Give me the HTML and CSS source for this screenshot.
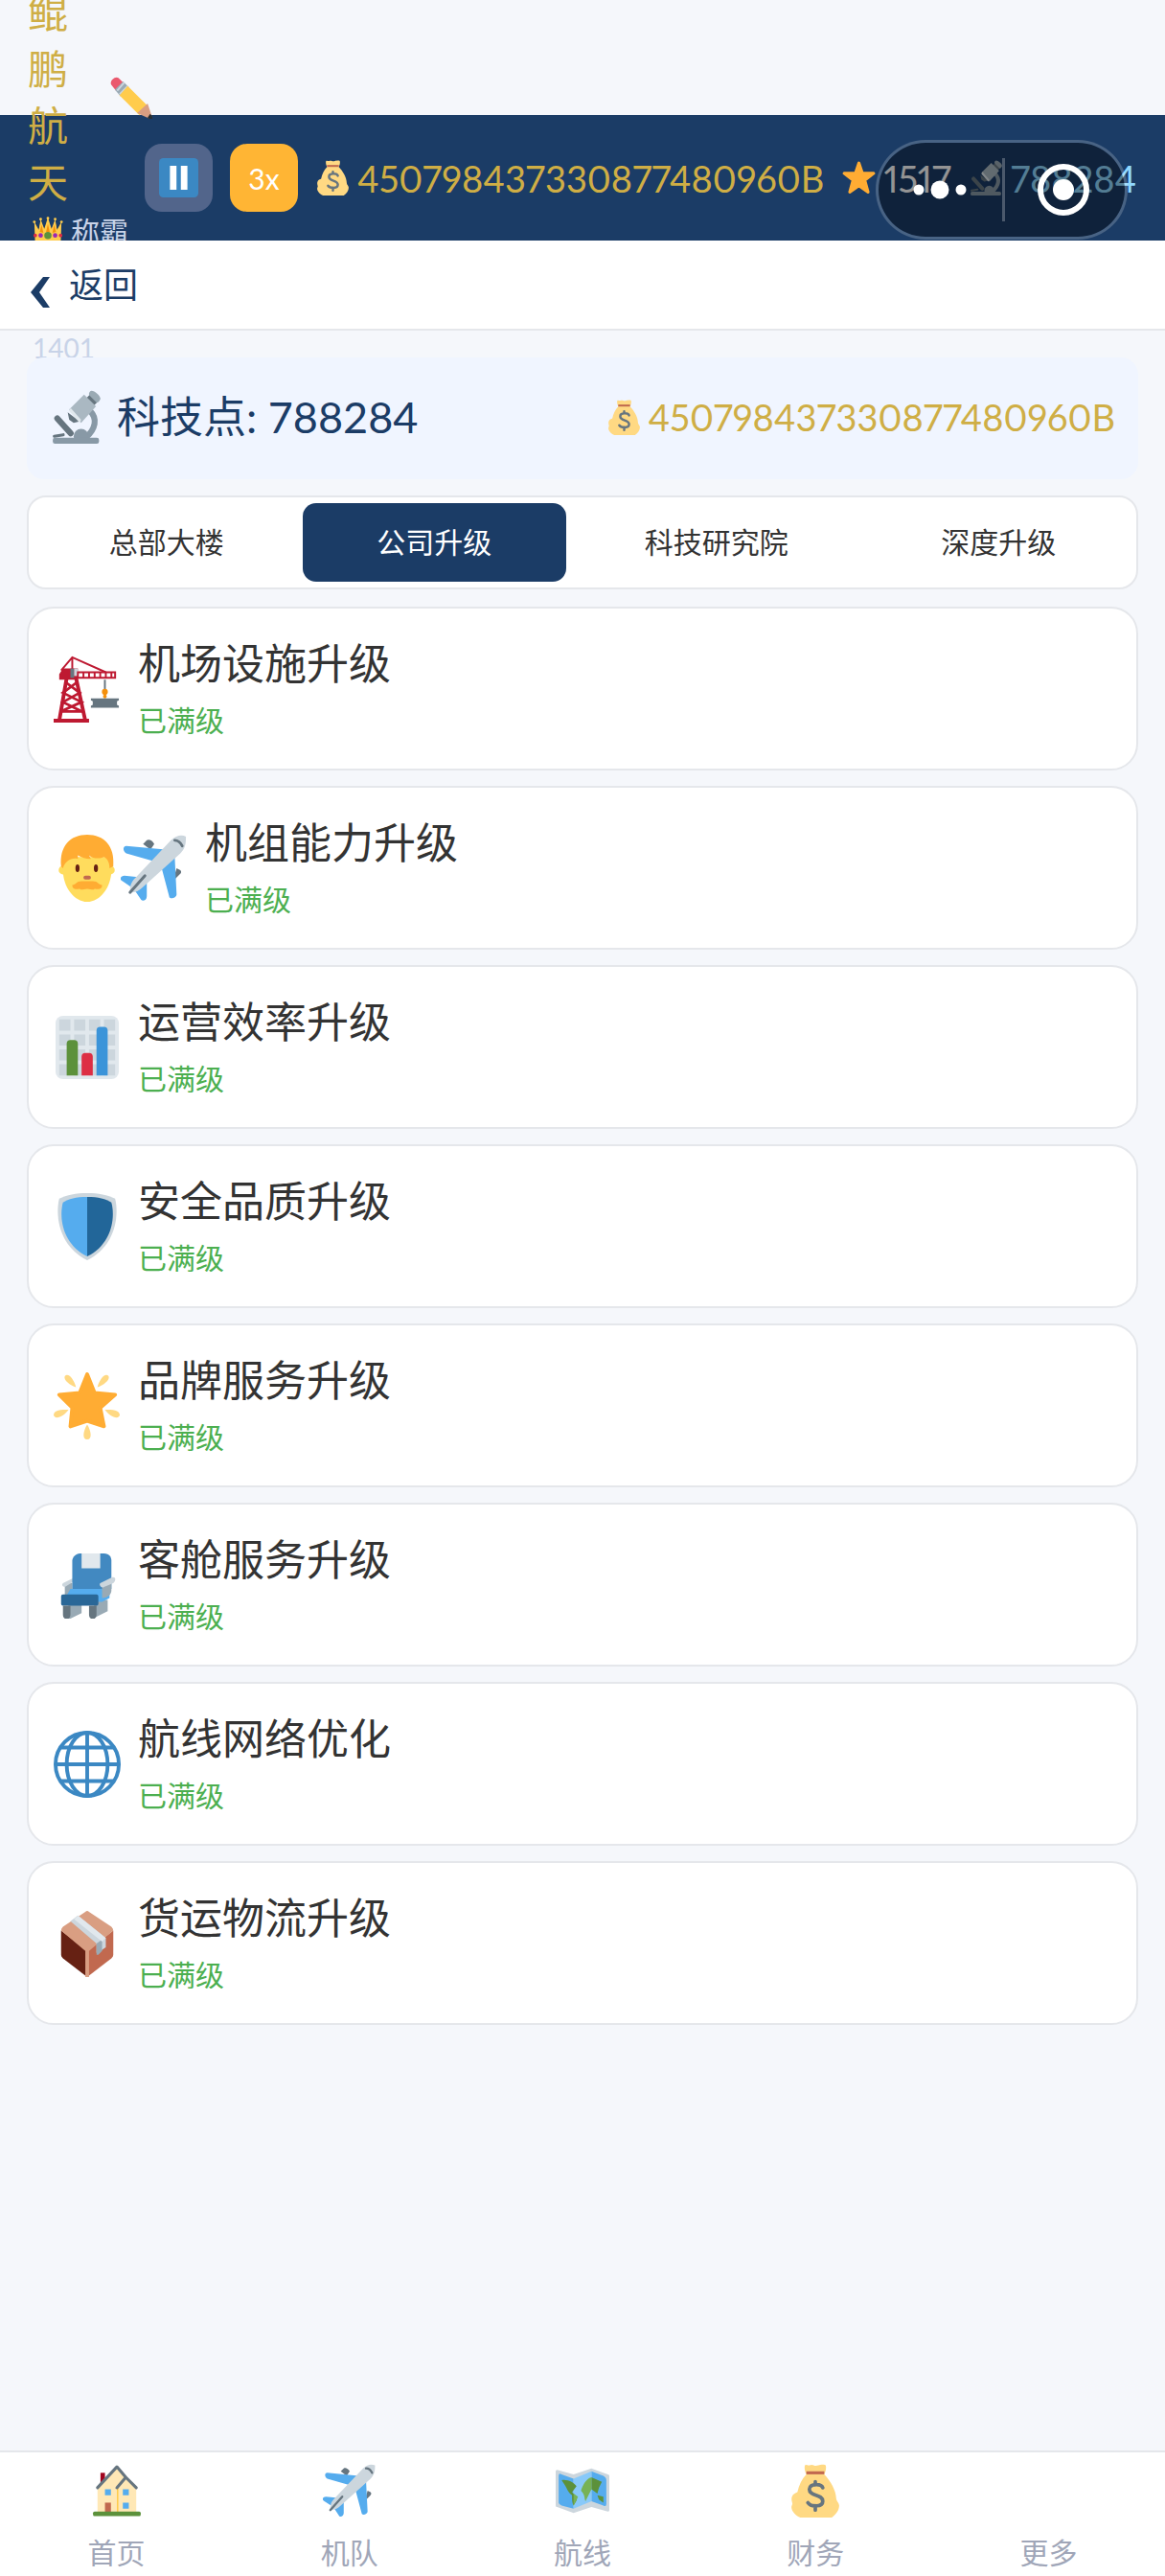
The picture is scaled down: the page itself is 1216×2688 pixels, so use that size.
FILE: index.html
```
<!DOCTYPE html>
<html lang="zh-CN">
<head>
    <meta charset="UTF-8">
    <meta name="viewport" content="width=device-width, initial-scale=1.0">
    <title>公司升级</title>
    <link rel="stylesheet" href="styles.css">
</head>
<body>
    <!-- icon sprite -->
    <svg class="sprite" aria-hidden="true">
        <symbol id="i-bag" viewBox="0 0 36 36">
            <path fill="#FFD983" d="M11 1c1-1 2 .4 3 0s2-.6 3 0 2 .2 3 0 4-1 5 0c.5 2 0 4-1 6 4 4 8 11 8 16 0 2 2 3 2 5 0 3-2 6-5 8H8c-3-1-6-4-6-7 0-1 1-2 .5-3C1 21 4 20 6 19c1-5 3-9 6-12-1-2-1.500-4-1-6z"/>
            <path fill="#C1694F" d="M12 5h12v2H12z"/>
            <path fill="none" stroke="#67757F" stroke-width="2.400" stroke-linecap="round" d="M23 16c-1-3-9-3-9 1 0 5 9 3 9 8 0 4-8 4-10 1M18 12v2M18 28v3"/>
        </symbol>
        <symbol id="i-star" viewBox="0 0 36 36">
            <path fill="#FFAC33" stroke="#FFAC33" stroke-width="3" stroke-linejoin="round" d="M18 3l3.600 10.500H33l-9 7 3.300 12L18 26l-9.300 6.500 3.300-12-9-7h11.400z"/>
        </symbol>
        <symbol id="i-microscope" viewBox="0 0 36 36">
            <path fill="none" stroke="#8899A6" stroke-width="4" d="M27 14c5 5 4 12-3 18"/>
            <circle cx="21" cy="31" r="5" fill="#8899A6"/>
            <rect x="2" y="32" width="31" height="4" rx="1.500" fill="#8899A6"/>
            <path fill="none" stroke="#66757F" stroke-width="4" stroke-linecap="round" d="M5 19l9 10"/>
            <path fill="none" stroke="#66757F" stroke-width="2" stroke-linecap="round" d="M3 31l6-1"/>
            <path fill="#66757F" d="M24 6l4-4 5 5-4 4zM12 15l1 5 3 2 4-1z"/>
            <path fill="#9AAAB4" d="M27 1c1-2 7 2 7 5-1 2-2 3-3 2l-4-4c-1-1-1-2 0-3z"/>
            <path fill="#AAB8C2" d="M23 3l8 8-10 11-8-9z"/>
            <path fill="#E1E8ED" d="M14 12l7 8-1 2-7-8z"/>
        </symbol>
        <symbol id="i-pencil" viewBox="0 0 36 36">
            <path fill="#EA596E" d="M1 7c-2-3 3-8 6-6l4 4-6 7z"/>
            <path fill="#99AAB5" d="M4 11l7-7 5 5-7 8z"/>
            <path stroke="#CCD6DD" stroke-width="1.500" d="M6 12l6-7M8 15l7-7"/>
            <path fill="#FFCC4D" d="M8 16l7-8 17 17-7 8z"/>
            <path fill="#D99E82" d="M23 31l9-8 4 12c0 1-1 1-2 1z"/>
            <path fill="#292F33" d="M32 35l2-3c2 1 3 3 2 4s-3 0-4-1z"/>
        </symbol>
        <symbol id="i-crown" viewBox="0 0 36 36">
            <path fill="#F4900C" d="M6 24l4-16 4 8 4-9 4 9 4-8 4 16z"/>
            <path fill="#FFCC4D" d="M4 35L3 8l5 9 2-12 4 11 4-13 4 13 4-11 2 12 5-9-1 27z"/>
            <path fill="#F4900C" d="M9 19l2-8 2 9zM23 20l2-9 2 8zM16 19l2-9 2 9z"/>
            <g fill="#FFCC4D"><circle cx="3" cy="8" r="1.500"/><circle cx="10" cy="5" r="1.500"/><circle cx="18" cy="4" r="1.500"/><circle cx="26" cy="5" r="1.500"/><circle cx="33" cy="8" r="1.500"/></g>
            <circle cx="18" cy="23" r="4" fill="#5C913B"/>
            <circle cx="10" cy="23" r="2.500" fill="#9B26B6"/>
            <circle cx="26" cy="23" r="2.500" fill="#9B26B6"/>
            <circle cx="4" cy="23" r="2" fill="#DD2E44"/>
            <circle cx="32" cy="23" r="2" fill="#DD2E44"/>
        </symbol>
        <symbol id="i-pause" viewBox="0 0 36 36">
            <rect width="36" height="36" rx="4" fill="#3B88C3"/>
            <path fill="#fff" d="M10 7h6v22h-6zM20 7h6v22h-6z"/>
        </symbol>
        <symbol id="i-crane" viewBox="0 0 36 36">
            <path fill="none" stroke="#BE1931" stroke-width="1" d="M4 8l6-7 18 8M10 1v7"/>
            <path fill="none" stroke="#BE1931" stroke-width="2" d="M7 12L3 35M12 12l5 23"/>
            <path fill="none" stroke="#BE1931" stroke-width="1.400" d="M6 14l8 6-9 5 10 5M13 14l-8 6 10 5-11 5M4 30h12"/>
            <path fill="#BE1931" d="M0 34h19v2H0zM5 7h8v6H3V10z"/>
            <path fill="#66757F" d="M9 7h2v5H9z"/>
            <path fill="#CCD6DD" d="M11 7h2v4h-2z"/>
            <path fill="none" stroke="#BE1931" stroke-width="1" d="M13 9h20v3H13zM16 9v3M19 9v3M22 9v3M25 9v3M28 9v3M31 9v3"/>
            <path stroke="#66757F" stroke-width="1" d="M27.500 13v6"/>
            <circle cx="27.500" cy="19.500" r="1.600" fill="#F4900C"/>
            <circle cx="27.500" cy="22" r="1" fill="#F4900C"/>
            <path fill="#66757F" d="M20 23h15v1l-1 .5v2l1 .5v1H20v-1l1-.5v-2l-1-.5z"/>
        </symbol>
        <symbol id="i-man" viewBox="0 0 36 36">
            <circle cx="5" cy="19" r="2.300" fill="#FFDC5D"/>
            <circle cx="30.500" cy="19" r="2.300" fill="#FFDC5D"/>
            <path fill="#FFDC5D" d="M5 12h26v7c0 9-6 17-13 17S5 28 5 19z"/>
            <path fill="#FFAC33" d="M4 17C3 6 9 0 18 0s15 6 14 17l-2 1c0-3-1-5-3-6-2 1-6 1-8-1l1 2c-3 0-5-1-7-2v2c-3-1-7 1-8 5z"/>
            <ellipse cx="12.800" cy="18" rx="1.100" ry="2" fill="#662113"/>
            <ellipse cx="22.700" cy="18" rx="1.100" ry="2" fill="#662113"/>
            <rect x="16" y="22" width="4" height="2" rx="1" fill="#C1694F"/>
            <path fill="#FFAC33" d="M10 27c2 0 2-2 5-2h6c3 0 3 2 5 2 0 3-3 2-4 2-1 1-2 0-4 0s-3 1-4 0c-1 0-4 1-4-2z"/>
        </symbol>
        <symbol id="i-plane" viewBox="0 0 36 36">
            <path fill="#66757F" d="M12 5l2-2c1-.7 3 0 4 2l-2 3zM30 18l2 1c1 1 0 2 0 2l-4 4z"/>
            <path fill="#55ACEE" d="M3 6l21 2-7 6L3 10C1 9 1 6 3 6zM29 12l1 20c0 2-4 3-4 1l-4-15zM2 22l10 1-5 6-6-4c-2-1-1-3 1-3zM14 24v9c0 2-2 3-3 2l-4-6z"/>
            <path fill="#CCD6DD" d="M27 3c3-3 6-3 8-2 0 3 0 6-3 9L12 28c-2 2-4 3-7 3 0-3 0-5 3-8z"/>
            <path fill="none" stroke="#66757F" stroke-width="1.500" stroke-linecap="round" d="M29 3c2 0 3 1 4 3M13 22l-8 9"/>
        </symbol>
        <symbol id="i-chart" viewBox="0 0 36 36">
            <rect x="1" y="1" width="34" height="34" rx="4" fill="#E1E8ED"/>
            <path fill="none" stroke="#CCD6DD" stroke-width="6" stroke-dasharray="6 2" d="M3 6h30M3 14h30M3 22h30M3 30h30"/>
            <path fill="#5C913B" d="M7 33V16q0-2 2-2h2q2 0 2 2v17z"/>
            <path fill="#DD2E44" d="M15 33V23q0-2 2-2h2q2 0 2 2v10z"/>
            <path fill="#3B94D9" d="M23 33V9q0-2 2-2h2q2 0 2 2v24z"/>
        </symbol>
        <symbol id="i-shield" viewBox="0 0 36 36">
            <path fill="#CCD6DD" d="M18 0c6 0 11 1 15 3 2 8 1 25-15 33C2 28 1 11 3 3c4-2 9-3 15-3z"/>
            <path fill="#55ACEE" d="M18 2C12 2 8 3 5 5 3 12 4 27 18 34z"/>
            <path fill="#226699" d="M18 2c6 0 10 1 13 3 2 7 1 22-13 29z"/>
        </symbol>
        <symbol id="i-glow" viewBox="0 0 36 36">
            <path fill="#FFAC33" stroke="#FFAC33" stroke-width="2" stroke-linejoin="round" d="M18 1l4 10 11 1-8 7 2 10-9-3-9 3 1-10-7-7 11-1z"/>
            <g fill="#FFD983"><path d="M6 2c2-2 5 2 6 6-3-1-7-4-6-6zM29.500 2c-2-2-5 2-6 6 3-1 7-4 6-6zM0 23c0-3 4-3 8-3-2 3-7 6-8 3zM35.500 23c0-3-4-3-8-3 2 3 7 6 8 3zM18 36c-3 0-2-5 0-8 2 3 3 8 0 8z"/></g>
        </symbol>
        <symbol id="i-seat" viewBox="0 0 36 36">
            <path fill="#99AAB5" d="M6 17h4v7H6zM8 28h7v5l-8 4zM22 26h7v6l-8 4z"/>
            <path fill="#CCD6DD" d="M5 17l6-3v2l-5 3c-1 0-2-1-1-2z"/>
            <path fill="#4289C1" d="M10 20V5c0-2 2-4 4-4h13c3 0 4 2 4 4v15z"/>
            <path fill="#E1E8ED" d="M15 1h10v8H15z"/>
            <path fill="#55ACEE" d="M9 20h21v5l-4 2H5z"/>
            <path fill="#99AAB5" d="M26 18l5-3v6c0 2-2 4-5 4z"/>
            <path fill="#CCD6DD" d="M25 17l6-3c2-1 3 1 1 3l-5 2c-1 1-3-1-2-2z"/>
            <rect x="4" y="23" width="20" height="6" rx="1" fill="#2A6797"/>
            <path fill="#66757F" d="M5 29h4v5c0 3-4 3-4 0zM19 29h4v5c0 3-4 3-4 0z"/>
        </symbol>
        <symbol id="i-globe" viewBox="0 0 36 36">
            <g fill="none" stroke="#3B88C3" stroke-width="2">
                <circle cx="18" cy="18" r="17"/>
                <ellipse cx="18" cy="18" rx="11" ry="17"/>
                <path d="M18 1v34M1 18h34M4 9h28M4 27h28"/>
            </g>
        </symbol>
        <symbol id="i-box" viewBox="0 0 36 36">
            <path fill="#662113" d="M4 11l14 11v14L5 26q-1-1-1-2z"/>
            <path fill="#C1694F" d="M32 11L18 22v14l13-10q1-1 1-2z"/>
            <path fill="#D99E82" d="M4 11q0-1 1-2L17 1q1-1 2 0l12 8q1 1 1 2L19 22v14h-2V22z"/>
            <path fill="#CCD6DD" d="M9 6l4-3 15 12v5q-4 3-5 3v-5z"/>
            <path fill="#99AAB5" d="M23 18l3-2v6l-2 2h-1z"/>
            <path fill="#E1E8ED" d="M11 5l2-2 15 12-2 2z"/>
        </symbol>
        <symbol id="i-house" viewBox="0 0 36 36">
            <path fill="#A0041E" d="M7 6h3v7H7z"/>
            <path fill="#FFE8B6" d="M5 33V15L18 3l13 13v17z"/>
            <path stroke="#FFCC4D" stroke-width="1" d="M18.500 16v17"/>
            <path fill="none" stroke="#66757F" stroke-width="2" stroke-linecap="round" stroke-linejoin="round" d="M5 16L18 2l6 7M18 16l6-7 7 7"/>
            <path fill="#55ACEE" d="M10 17h4v4h-4zM22 17h4v4h-4zM22 26h4v4h-4z"/>
            <path fill="#C1694F" d="M10 26h4v7h-4z"/>
            <rect x="2" y="32" width="32" height="3" rx="1" fill="#5C913B"/>
        </symbol>
        <symbol id="i-map" viewBox="0 0 36 36">
            <path fill="#CCD6DD" d="M0 5q0-1 1-1l11 3 12-4 11 4q1 0 1 1v23q0 1-1 1l-11-3-12 4-11-4q-1 0-1-1z"/>
            <path fill="#55ACEE" d="M2 8q0-2 2-1l8 3v20l-8-2q-2-1-2-2zM24 5l8 3q2 1 2 3v16q0 2-2 1l-8-3z"/>
            <path fill="#88C9F9" d="M12 10l12-5v20l-12 5z"/>
            <path fill="#5C913B" d="M4 11c3-1 8 1 10 4l-3 4 3 3c1 2-1 4-2 6-1-2-1-4-1-7-3-2-3-4-5-7zM24 9l7 3-2 4-1 4-4-3zM28 21l4 1v4l-3-2z"/>
            <path fill="#77B255" d="M17 18c1-3 3-8 7-9v8l-4 8c-1-2 0-4-3-7zM12 20l3 2-2 4-1 2z"/>
        </symbol>
    </svg>

    <header class="topbar">
        <div class="player">
            <div class="player-name">
                <span class="name">鲲鹏航天</span>
                <svg class="icon-edit"><use href="#i-pencil"/></svg>
            </div>
            <div class="rank"><svg class="icon-rank"><use href="#i-crown"/></svg>称霸</div>
            <div class="rank-score">1401</div>
        </div>
        <button class="speed-btn" aria-label="暂停"><svg class="icon-pause"><use href="#i-pause"/></svg></button>
        <button class="speed-btn active">3x</button>
        <div class="stat gold"><svg class="icon-stat"><use href="#i-bag"/></svg>450798437330877480960B</div>
        <div class="stat"><svg class="icon-stat"><use href="#i-star"/></svg>1517</div>
        <div class="stat tech"><svg class="icon-stat"><use href="#i-microscope"/></svg>788284</div>

        <div class="capsule">
            <button class="capsule-btn" aria-label="菜单">
                <svg class="icon-menu" viewBox="0 0 56 20" fill="#fff"><circle cx="6" cy="10" r="5.500"/><circle cx="28" cy="10" r="9.500"/><circle cx="50" cy="10" r="5.500"/></svg>
            </button>
            <button class="capsule-btn" aria-label="关闭">
                <svg class="icon-close" viewBox="0 0 54 54"><circle cx="27" cy="27" r="24" fill="none" stroke="#fff" stroke-width="6"/><circle cx="27" cy="27" r="11" fill="#fff"/></svg>
            </button>
        </div>
    </header>

    <div class="backbar">
        <button class="back">
            <svg class="icon-back" viewBox="0 0 20 32"><path d="M13 0h7L9 16l11 16h-7L0 16z" fill="#1b3c66"/></svg>
            返回
        </button>
    </div>

    <main>
        <div class="summary">
            <div class="points"><svg class="icon-points"><use href="#i-microscope"/></svg>科技点: 788284</div>
            <div class="stat gold"><svg class="icon-stat"><use href="#i-bag"/></svg>450798437330877480960B</div>
        </div>

        <div class="tabs">
            <button class="tab">总部大楼</button>
            <button class="tab active">公司升级</button>
            <button class="tab">科技研究院</button>
            <button class="tab">深度升级</button>
        </div>

        <div class="cards">
            <div class="card">
                <div class="card-icon"><svg><use href="#i-crane"/></svg></div>
                <div class="card-text"><h2>机场设施升级</h2><p>已满级</p></div>
            </div>
            <div class="card">
                <div class="card-icon"><svg><use href="#i-man"/></svg><svg><use href="#i-plane"/></svg></div>
                <div class="card-text"><h2>机组能力升级</h2><p>已满级</p></div>
            </div>
            <div class="card">
                <div class="card-icon"><svg><use href="#i-chart"/></svg></div>
                <div class="card-text"><h2>运营效率升级</h2><p>已满级</p></div>
            </div>
            <div class="card">
                <div class="card-icon"><svg><use href="#i-shield"/></svg></div>
                <div class="card-text"><h2>安全品质升级</h2><p>已满级</p></div>
            </div>
            <div class="card">
                <div class="card-icon"><svg><use href="#i-glow"/></svg></div>
                <div class="card-text"><h2>品牌服务升级</h2><p>已满级</p></div>
            </div>
            <div class="card">
                <div class="card-icon"><svg><use href="#i-seat"/></svg></div>
                <div class="card-text"><h2>客舱服务升级</h2><p>已满级</p></div>
            </div>
            <div class="card">
                <div class="card-icon"><svg><use href="#i-globe"/></svg></div>
                <div class="card-text"><h2>航线网络优化</h2><p>已满级</p></div>
            </div>
            <div class="card">
                <div class="card-icon"><svg><use href="#i-box"/></svg></div>
                <div class="card-text"><h2>货运物流升级</h2><p>已满级</p></div>
            </div>
        </div>
    </main>

    <nav class="bottom-nav">
        <a href="#"><span class="nav-icon"><svg><use href="#i-house"/></svg></span>首页</a>
        <a href="#"><span class="nav-icon"><svg><use href="#i-plane"/></svg></span>机队</a>
        <a href="#"><span class="nav-icon"><svg><use href="#i-map"/></svg></span>航线</a>
        <a href="#"><span class="nav-icon"><svg><use href="#i-bag"/></svg></span>财务</a>
        <a href="#"><span class="nav-icon"></span>更多</a>
    </nav>
</body>
</html>
```
FILE: styles.css
```
* {
    box-sizing: border-box;
}
body {
    font-family: Lato, "Noto Sans CJK SC", sans-serif;
    background-color: #f5f7fb;
    color: #333333;
    display: flex;
    flex-direction: column;
    min-height: 100vh;
    margin: 0;
    padding-top: 120px;
    overflow-x: hidden;
}
button {
    font-family: inherit;
    border: none;
    padding: 0;
    background: none;
    cursor: pointer;
}
svg {
    display: block;
    flex-shrink: 0;
}
.sprite {
    display: none;
}

/* top bar */
.topbar {
    position: relative;
    display: flex;
    align-items: center;
    gap: 18px;
    height: 131px;
    padding: 0 28px;
    background-color: #1b3c66;
    color: #ffffff;
}
.player {
    flex: 0 0 105px;
    min-width: 0;
    padding-bottom: 4px;
    color: #c8d3e8;
}
.player-name {
    display: flex;
    align-items: center;
    gap: 43px;
}
.name {
    flex: 0 0 44px;
    font-size: 42px;
    line-height: 59px;
    text-align: center;
    word-break: break-all;
    color: #cfae45;
}
.icon-edit {
    width: 44px;
    height: 44px;
}
.rank {
    display: flex;
    align-items: center;
    gap: 7px;
    padding-left: 5px;
    font-size: 30px;
    line-height: 42px;
    white-space: nowrap;
}
.icon-rank {
    width: 34px;
    height: 34px;
}
.rank-score {
    margin-top: 80px;
    padding-left: 6px;
    font-size: 28px;
    line-height: 42px;
}
.speed-btn {
    display: flex;
    justify-content: center;
    align-items: center;
    flex: 0 0 71px;
    height: 71px;
    border-radius: 18px;
    background-color: #52658b;
    color: #ffffff;
    font-size: 30px;
}
.speed-btn.active {
    background-color: #ffb534;
}
.icon-pause {
    width: 41px;
    height: 41px;
}
.stat {
    display: flex;
    align-items: center;
    gap: 7px;
    font-size: 38px;
    line-height: 48px;
    font-variant-numeric: proportional-nums;
    white-space: nowrap;
}
.gold {
    color: #cfae45;
}
.tech {
    color: #90d8ff;
}
.icon-stat {
    width: 37px;
    height: 37px;
}
.capsule {
    position: absolute;
    top: 26px;
    right: 39px;
    display: flex;
    width: 263px;
    height: 104px;
    border: 3px solid rgba(255, 255, 255, 0.2);
    border-radius: 52px;
    background-color: rgba(0, 0, 0, 0.42);
    background-clip: padding-box;
}
.capsule-btn {
    display: flex;
    flex: 1;
    justify-content: center;
    align-items: center;
    position: relative;
}
.capsule-btn + .capsule-btn::before {
    content: "";
    position: absolute;
    left: 0;
    top: 16px;
    bottom: 16px;
    width: 3px;
    background-color: rgba(255, 255, 255, 0.25);
}
.icon-menu {
    width: 56px;
    height: 20px;
}
.icon-close {
    width: 54px;
    height: 54px;
}

/* back bar */
.backbar {
    position: relative;
    height: 94px;
    padding: 0 32px;
    display: flex;
    align-items: center;
    background-color: #ffffff;
    border-bottom: 2px solid #e5e7eb;
}
.back {
    display: flex;
    align-items: center;
    gap: 20px;
    color: #1b3c66;
    font-size: 36px;
    line-height: 48px;
}
.icon-back {
    width: 20px;
    height: 32px;
    margin-top: 16px;
}

main {
    flex: 1;
    padding: 28px;
}
.summary {
    position: relative;
    display: flex;
    justify-content: space-between;
    align-items: center;
    height: 127px;
    padding: 0 24px 3px;
    border-radius: 18px;
    background-color: #f0f5ff;
}
.points {
    display: flex;
    align-items: center;
    gap: 14px;
    color: #1b3c66;
    font-size: 45px;
    line-height: 60px;
}
.icon-points {
    width: 56px;
    height: 56px;
}

.tabs {
    display: flex;
    gap: 4px;
    margin: 17px 0 18px;
    padding: 6px;
    border: 2px solid #e5e7eb;
    border-radius: 20px;
    background-color: #ffffff;
}
.tab {
    flex: 1 1 auto;
    height: 82px;
    padding-bottom: 4px;
    border-radius: 14px;
    color: #333333;
    font-size: 30px;
}
.tab.active {
    background-color: #1b3c66;
    color: #ffffff;
}

.cards {
    display: flex;
    flex-direction: column;
    gap: 16px;
}
.card {
    display: flex;
    align-items: center;
    gap: 18px;
    height: 171px;
    padding: 0 26px;
    border: 2px solid #e5e7eb;
    border-radius: 28px;
    background-color: #ffffff;
}
.card-icon {
    display: flex;
}
.card-icon svg {
    width: 70px;
    height: 70px;
}
.card-text {
    padding-bottom: 4px;
}
.card h2 {
    margin: 0 0 8px;
    font-size: 44px;
    line-height: 60px;
    font-weight: 400;
}
.card p {
    margin: 0;
    color: #4caf50;
    font-size: 30px;
    line-height: 42px;
}

/* bottom nav */
.bottom-nav {
    display: flex;
    padding: 12px 0 5px;
    border-top: 2px solid #e5e7eb;
    background-color: #ffffff;
}
.bottom-nav a {
    flex: 1;
    display: flex;
    flex-direction: column;
    align-items: center;
    gap: 16px;
    color: #a0a6b8;
    font-size: 30px;
    line-height: 40px;
    text-decoration: none;
}
.nav-icon {
    height: 56px;
}
.nav-icon svg {
    width: 56px;
    height: 56px;
}
```
